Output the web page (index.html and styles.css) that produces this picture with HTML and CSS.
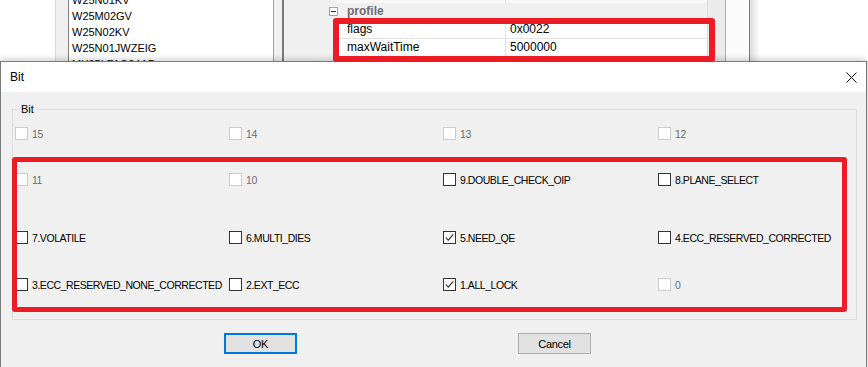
FILE: index.html
```html
<!DOCTYPE html>
<html lang="en">

<head>
    <meta charset="UTF-8">
    <meta name="viewport" content="width=device-width, initial-scale=1.0">
    <title>Bit</title>
    <link rel="stylesheet" href="styles.css">
</head>

<body>
    <!-- window behind the dialog -->
    <div class="behind">
        <div class="pane-white"></div>
        <div class="pane-gap"></div>
        <div class="chip-list">
            <div class="chip-items">
                <div>W25N01KV</div>
                <div>W25M02GV</div>
                <div>W25N02KV</div>
                <div>W25N01JWZEIG</div>
                <div>MX35LF1G24AD</div>
            </div>
        </div>
        <div class="splitter"></div>
        <div class="props">
            <div class="prop-row prop-prev">
                <span></span><span class="prop-name"></span><span class="prop-value"></span>
            </div>
            <div class="prop-cat">
                <span class="toggle"></span>
                <span class="cat-name">profile</span>
            </div>
            <div class="prop-row">
                <span></span><span class="prop-name">flags</span><span class="prop-value">0x0022</span>
            </div>
            <div class="prop-row">
                <span></span><span class="prop-name">maxWaitTime</span><span class="prop-value">5000000</span>
            </div>
        </div>
        <div class="strip-gray"></div>
        <div class="strip-white"></div>
        <div class="pane-far"></div>
    </div>

    <div class="dialog">
        <div class="titlebar">
            <span class="title">Bit</span>
            <svg class="close" width="11" height="11" viewBox="0 0 11 11">
                <path d="M0.5 0.5 L10.5 10.5 M10.5 0.5 L0.5 10.5" stroke="#111" stroke-width="1" fill="none" />
            </svg>
        </div>
        <div class="dialog-body">
            <fieldset class="group">
                <legend>Bit</legend>
                <div class="bits">
                    <label class="bit off"><span class="box"></span><span class="txt">15</span></label>
                    <label class="bit off"><span class="box"></span><span class="txt">14</span></label>
                    <label class="bit off"><span class="box"></span><span class="txt">13</span></label>
                    <label class="bit off"><span class="box"></span><span class="txt">12</span></label>

                    <label class="bit off"><span class="box"></span><span class="txt">11</span></label>
                    <label class="bit off"><span class="box"></span><span class="txt">10</span></label>
                    <label class="bit"><span class="box"></span><span class="txt">9.DOUBLE_CHECK_OIP</span></label>
                    <label class="bit"><span class="box"></span><span class="txt">8.PLANE_SELECT</span></label>

                    <label class="bit"><span class="box"></span><span class="txt">7.VOLATILE</span></label>
                    <label class="bit"><span class="box"></span><span class="txt">6.MULTI_DIES</span></label>
                    <label class="bit"><span class="box"><svg viewBox="0 0 11 11"><path d="M1.8 5.6 L4.3 8.1 L9.3 2.4" /></svg></span><span class="txt">5.NEED_QE</span></label>
                    <label class="bit"><span class="box"></span><span class="txt">4.ECC_RESERVED_CORRECTED</span></label>

                    <label class="bit"><span class="box"></span><span class="txt">3.ECC_RESERVED_NONE_CORRECTED</span></label>
                    <label class="bit"><span class="box"></span><span class="txt">2.EXT_ECC</span></label>
                    <label class="bit"><span class="box"><svg viewBox="0 0 11 11"><path d="M1.8 5.6 L4.3 8.1 L9.3 2.4" /></svg></span><span class="txt">1.ALL_LOCK</span></label>
                    <label class="bit off"><span class="box"></span><span class="txt">0</span></label>
                </div>
            </fieldset>
            <div class="buttons">
                <button class="btn btn-default">OK</button>
                <button class="btn">Cancel</button>
            </div>
        </div>
    </div>

    <!-- red annotation frames -->
    <div class="mark mark-props"></div>
    <div class="mark mark-bits"></div>
</body>

</html>
```

FILE: styles.css
```css
body {
    margin: 0;
    width: 868px;
    height: 367px;
    overflow: hidden;
    background-color: #f0f0f0;
    font-family: "Liberation Sans", Arial, sans-serif;
    color: #000;
}

/* ---- window behind ---- */

.behind {
    display: flex;
    height: 61px;
    overflow: hidden;
}

.pane-white {
    width: 55px;
    background: #fff;
    border-right: 1px solid #dadada;
}

.pane-gap {
    width: 12px;
    background: #f0f0f0;
}

.chip-list {
    width: 206px;
    box-sizing: border-box;
    background: #fff;
    border-left: 1px solid #828282;
    border-right: 1px solid #a0a0a0;
    overflow: hidden;
}

.chip-items {
    margin-top: -8px;
    padding-left: 3px;
    font-size: 11px;
    line-height: 16px;
}

.splitter {
    width: 10px;
    box-sizing: border-box;
    background: #f0f0f0;
    border-right: 2px solid #7a7a7a;
}

.props {
    width: 424px;
    box-sizing: border-box;
    padding-left: 37px;
    background: #f0f0f0;
    border-right: 1px solid #dcdcdc;
    font-size: 12px;
}

.prop-row {
    display: grid;
    grid-template-columns: 16px 169px 1fr;
    height: 18px;
    line-height: 17px;
}

.prop-name,
.prop-value {
    background: #fff;
    border-bottom: 1px solid #e3e3e3;
}

.prop-name {
    padding-left: 10px;
    border-right: 1px solid #e3e3e3;
}

.prop-value {
    padding-left: 4px;
}

.prop-prev {
    height: 3px;
}

.prop-prev .prop-name,
.prop-prev .prop-value {
    background: #f7f7f7;
    border-bottom: none;
}

.prop-cat {
    display: flex;
    align-items: center;
    height: 18px;
}

.toggle {
    width: 9px;
    height: 9px;
    box-sizing: border-box;
    margin-left: 8px;
    margin-bottom: 2px;
    border: 1px solid #9aa6b4;
    background: linear-gradient(#2f2f2f, #2f2f2f) center / 5px 1px no-repeat, #fff;
}

.cat-name {
    margin-left: 9px;
    margin-bottom: 3px;
    font-weight: bold;
    color: #6d6d6d;
}

.strip-gray {
    width: 18px;
    box-sizing: border-box;
    background: #ebebeb;
    border-right: 1px solid #acacac;
}

.strip-white {
    width: 24px;
    box-sizing: border-box;
    background: #fbfbfb;
    border-right: 1px solid #7d7d7d;
}

.pane-far {
    flex: 1;
    background: linear-gradient(to right, #dcdcdc, #fff 10px);
}

/* ---- dialog ---- */

.dialog {
    width: 867px;
    box-sizing: border-box;
    border: 1px solid #7a7a7a;
    border-bottom: none;
    background: #f0f0f0;
    box-shadow: 0 -2px 6px rgba(0, 0, 0, 0.18);
    position: relative;
}

.titlebar {
    display: flex;
    align-items: center;
    justify-content: space-between;
    height: 30px;
    background: #fff;
}

.title {
    margin-left: 9px;
    font-size: 12px;
}

.close {
    margin-right: 9px;
}

.dialog-body {
    padding-top: 11px;
    height: 264px;
    overflow: hidden;
}

.group {
    margin: 0 9px 0 11px;
    padding: 11px 0 28px 2px;
    border: 1px solid #dcdcdc;
    min-inline-size: 0;
}

.group legend {
    margin-left: 4px;
    padding: 0 2px;
    font-size: 11px;
    line-height: 13px;
}

.bits {
    display: grid;
    grid-template-columns: 214px 214px 215px 1fr;
    grid-template-rows: 46px 58px 47px 13px;
    align-items: start;
}

.bit {
    display: flex;
    align-items: flex-start;
    height: 13px;
    font-size: 10.5px;
    letter-spacing: -0.45px;
    white-space: nowrap;
}

.box {
    display: block;
    width: 13px;
    height: 13px;
    box-sizing: border-box;
    border: 1px solid #333;
    background: #fff;
    margin-right: 4px;
}

.box svg {
    display: block;
    width: 11px;
    height: 11px;
}

.box svg path {
    fill: none;
    stroke: #333;
    stroke-width: 1.2;
}

.txt {
    line-height: 15px;
}

.bit.off {
    color: #6d6d6d;
}

.bit.off .box {
    border-color: #cccccc;
}

.buttons {
    display: flex;
    gap: 221px;
    margin-top: 13px;
    padding-left: 223px;
}

.btn {
    width: 73px;
    height: 21px;
    box-sizing: border-box;
    padding: 0;
    border: 1px solid #adadad;
    background: #e1e1e1;
    font-family: "Liberation Sans", Arial, sans-serif;
    font-size: 11px;
    letter-spacing: -0.3px;
    color: #000;
}

.btn-default {
    border: 2px solid #0078d7;
}

/* ---- red annotation frames ---- */

.mark {
    position: absolute;
    box-sizing: border-box;
    border: 5px solid #ed1c24;
    border-radius: 3px;
    z-index: 5;
}

.mark-props {
    left: 333px;
    top: 18px;
    width: 382px;
    height: 44px;
    border-width: 6px;
}

.mark-bits {
    left: 12px;
    top: 157px;
    width: 835px;
    height: 155px;
}
```
